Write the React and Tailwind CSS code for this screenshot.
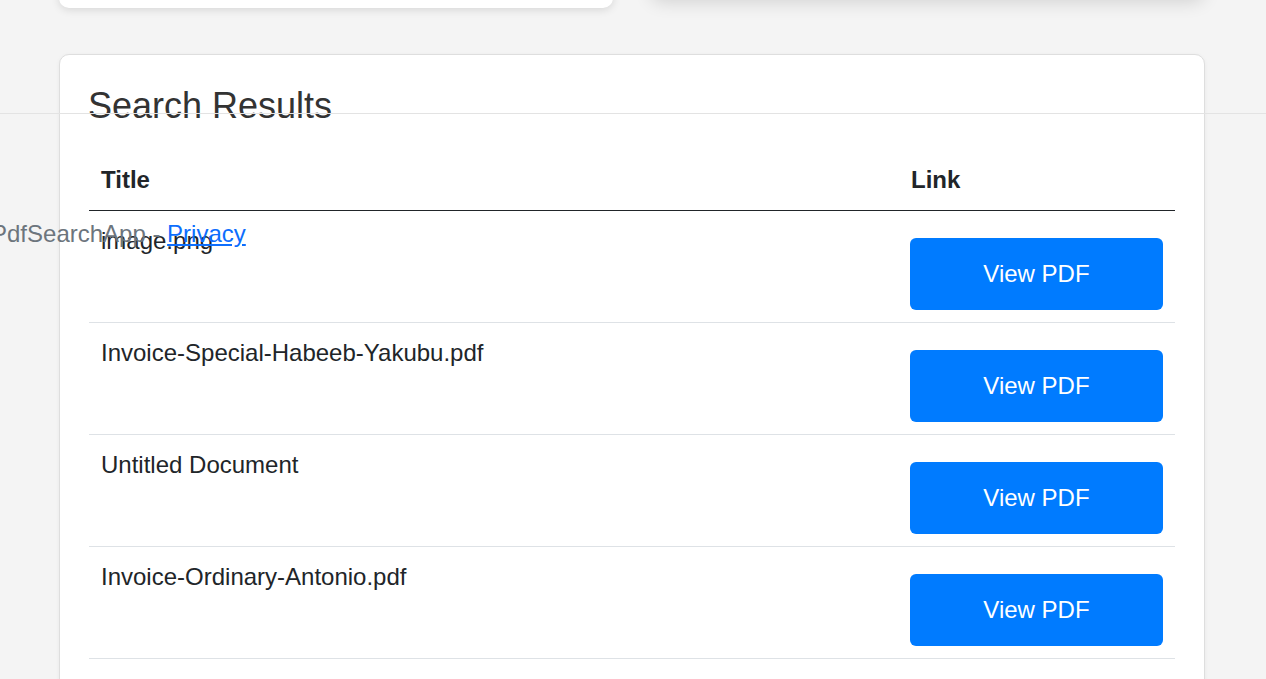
const results = [
  { id: 1, title: 'image.png' },
  { id: 2, title: 'Invoice-Special-Habeeb-Yakubu.pdf' },
  { id: 3, title: 'Untitled Document' },
  { id: 4, title: 'Invoice-Ordinary-Antonio.pdf' },
];

function ResultRow({ title }) {
  return (
    <tr className="border-b border-[#dee2e6]">
      <td className="px-3 pt-3 pb-3 align-top leading-[36px]">{title}</td>
      <td className="pl-[11px] pr-3 pt-3 pb-3 align-top">
        <a
          href="#"
          className="mt-[15px] flex h-[72px] w-[253px] items-center justify-center rounded-[6px] bg-[#007bff] text-white"
        >
          View PDF
        </a>
      </td>
    </tr>
  );
}

export default function App() {
  return (
    <div
      className="relative h-[679px] overflow-hidden bg-[#f4f4f4] text-[24px] text-[#212529]"
      style={{ fontFamily: '"Liberation Sans", Arial, sans-serif' }}
    >
      <div className="ml-[59px] w-[1146px]">
        {/* upper cards, scrolled mostly out of view */}
        <div className="-mt-[200px] grid grid-cols-2 items-start gap-[38px]">
          <div className="h-[208px] rounded-[10px] bg-white shadow-[0_2px_8px_rgba(0,0,0,0.12)]" />
          <div className="h-[198px] w-[553px] rounded-[10px] bg-white shadow-[0_4px_18px_rgba(0,0,0,0.14)]" />
        </div>

        <div className="mt-[46px] rounded-[10px] border border-[#dedede] bg-white px-[29px] pt-[29px] pb-10 shadow-[0_1px_4px_rgba(0,0,0,0.05)]">
          <h2 className="-ml-px mb-[23px] text-[36px] leading-[43px] text-[#333]">Search Results</h2>
          <table className="w-full border-collapse text-left">
            <thead>
              <tr className="border-b border-[#212529]">
                <th className="w-[810px] px-3 py-3 font-bold leading-[36px]">Title</th>
                <th className="px-3 py-3 font-bold leading-[36px]">Link</th>
              </tr>
            </thead>
            <tbody>
              {results.map((r) => (
                <ResultRow key={r.id} title={r.title} />
              ))}
            </tbody>
          </table>
        </div>
      </div>

      {/* footer overlapping the content */}
      <footer className="absolute inset-x-0 top-[113px] border-t border-[#e3e3e3] whitespace-nowrap">
        <div className="-ml-[9px] mt-[102px] leading-[36px] text-[#6c757d]">
          PdfSearchApp - <a href="#" className="text-[#0d6efd] underline">Privacy</a>
        </div>
      </footer>
    </div>
  );
}
